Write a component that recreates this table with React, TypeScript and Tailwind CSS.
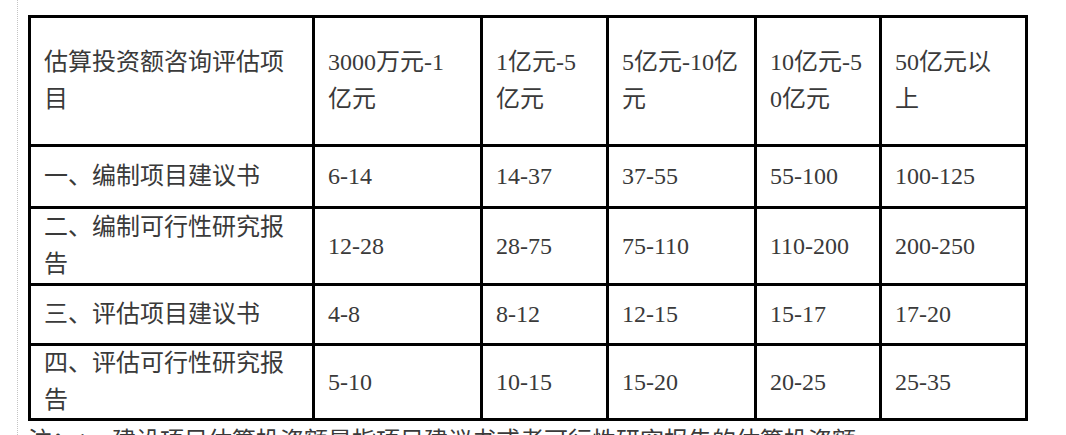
const HEAD = ["估算投资额咨询评估项目", "3000万元-1亿元", "1亿元-5亿元", "5亿元-10亿元", "10亿元-50亿元", "50亿元以上"];

const ROWS = [
  { h: "h-[59px]", cells: ["一、编制项目建议书", "6-14", "14-37", "37-55", "55-100", "100-125"] },
  { h: "h-[74px]", cells: ["二、编制可行性研究报告", "12-28", "28-75", "75-110", "110-200", "200-250"] },
  { h: "h-[57px]", cells: ["三、评估项目建议书", "4-8", "8-12", "12-15", "15-17", "17-20"] },
  { h: "h-[72px]", cells: ["四、评估可行性研究报告", "5-10", "10-15", "15-20", "20-25", "25-35"] },
];

function Cell({ text, h }: { text: string; h: string }) {
  return (
    <div className={`bg-white flex items-center px-[13px] ${h}`}>
      <span>{text}</span>
    </div>
  );
}

export default function App() {
  return (
    <div className="min-h-[435px] h-[435px] overflow-hidden bg-white">
      <div
        className="ml-[17px] h-full border-l border-dotted border-[#c4c4c4] pl-[10px] pt-[15px] text-[24px] leading-[37px] text-[#3a3a3a] break-all"
        style={{ fontFamily: '"Liberation Serif", "Noto Sans CJK SC", serif' }}
      >
        {/* fee table */}
        <div className="grid w-[1000px] grid-cols-[281px_165px_123px_145px_122px_143px] gap-[3px] border-[3px] border-black bg-black">
          {HEAD.map((t) => (
            <Cell key={t} text={t} h="h-[126px]" />
          ))}
          {ROWS.map((row) =>
            row.cells.map((t, i) => <Cell key={row.cells[0] + i} text={t} h={row.h} />)
          )}
        </div>
        <p className="mt-[2px] whitespace-nowrap">注：1、建设项目估算投资额是指项目建议书或者可行性研究报告的估算投资额。</p>
      </div>
    </div>
  );
}
